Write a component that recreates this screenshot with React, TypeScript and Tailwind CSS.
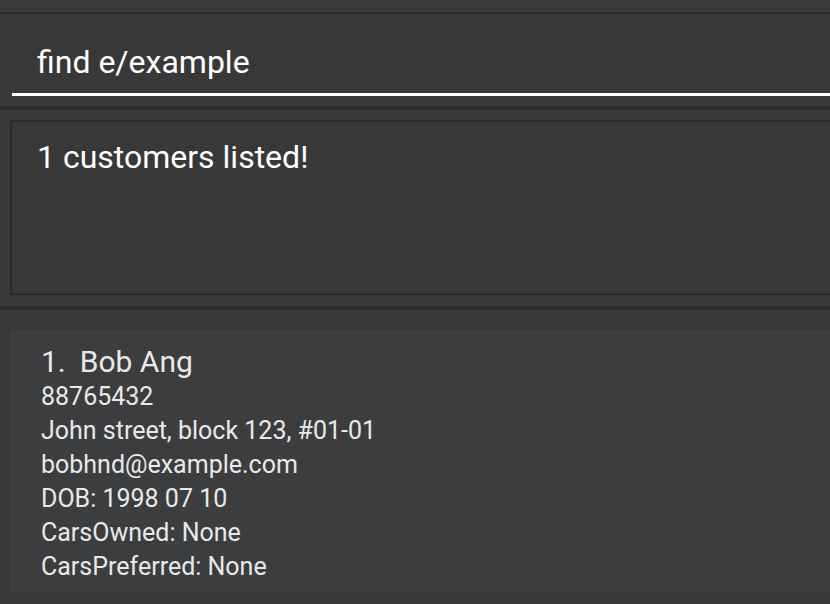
const font = { fontFamily: 'Roboto, "Liberation Sans", sans-serif' };

const details = [
    '88765432',
    'John street, block 123, #01-01',
    'bobhnd@example.com',
    'DOB: 1998 07 10',
    'CarsOwned: None',
    'CarsPreferred: None',
];

export default function App() {
    return (
        <div className="w-[830px] h-[604px] overflow-hidden bg-[#383838] flex flex-col" style={font}>
            {/* top strip, left over from the menu bar */}
            <div className="h-[12px] bg-[#3a3a3a]" />
            <div className="h-[2px] bg-[#2b2b2b]" />

            {/* Command box */}
            <div className="h-[92px] pl-[12px] pt-[30px] w-[860px]">
                <div className="border-b-[3px] border-white pb-[13px] pl-[25px]">
                    <span className="block text-[32px] leading-[36px] text-white">find e/example</span>
                </div>
            </div>
            <div className="h-[4px] bg-[#2b2b2b]" />

            {/* Result display */}
            <div className="h-[196px] pl-[10px] pt-[10px] w-[860px]">
                <div className="h-[175px] border-2 border-[#2a2a2a] pl-[25px] pt-[17px]">
                    <span className="block text-[32px] leading-[36px] text-white">1 customers listed!</span>
                </div>
            </div>
            <div className="h-[4px] bg-[#2b2b2b]" />

            {/* Customer list */}
            <div className="flex-1 pl-[10px] pt-[20px] w-[860px]">
                <div className="h-[263px] bg-[#3c3d3f] pl-[31px] pt-[14px] text-[#e9e9e9]">
                    <div className="flex items-baseline text-[30px] leading-[36px]">
                        <span>1.</span>
                        <span className="ml-[14px]">Bob Ang</span>
                    </div>
                    {details.map((line) => (
                        <div key={line} className="text-[25px] leading-[34px]">{line}</div>
                    ))}
                </div>
            </div>
        </div>
    );
}
